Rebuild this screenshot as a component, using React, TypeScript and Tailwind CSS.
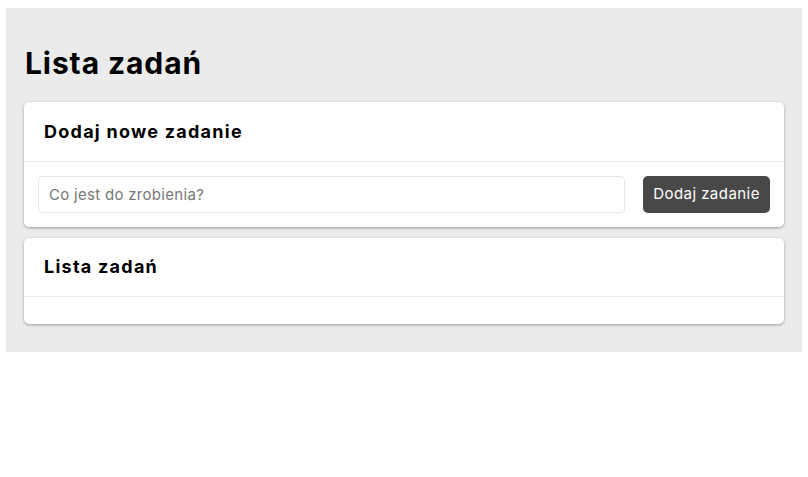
import React from "react";

export default function App() {
  return (
    <div className="min-h-[477px] bg-white pt-2 px-[6px]" style={{ fontFamily: "Inter, 'Open Sans', sans-serif" }}>
      <div className="bg-[#ebebeb] px-[18px] pt-[37px] pb-[28px]">
        <h1 className="text-[30px] leading-[36px] font-bold text-black tracking-[0.9px] mb-[21px] ml-px">Lista zadań</h1>
        <div className="bg-white rounded-[5px] shadow-[0_1px_3px_rgba(0,0,0,0.35)]">
          <div className="px-5 h-[60px] flex items-center pb-px border-b border-[#ebebeb]">
            <h2 className="text-[18px] font-bold text-black tracking-[1.25px]">Dodaj nowe zadanie</h2>
          </div>
          <div className="flex items-center gap-[18px] px-[14px] pt-[14px] pb-[14px]">
            <input
              className="flex-1 h-[37px] border border-[#e6e6e6] rounded-[4px] px-[10px] text-[15px] tracking-[0.3px] text-[#333] placeholder:text-[#777] outline-none"
              placeholder="Co jest do zrobienia?"
            />
            <button className="h-[37px] w-[127px] bg-[#484848] text-white text-[15px] tracking-[0.45px] rounded-[5px]">
              Dodaj zadanie
            </button>
          </div>
        </div>
        <div className="bg-white rounded-[5px] shadow-[0_1px_3px_rgba(0,0,0,0.35)] mt-[11px]">
          <div className="px-5 h-[59px] flex items-center pb-px border-b border-[#ebebeb]">
            <h2 className="text-[18px] font-bold text-black tracking-[1.25px]">Lista zadań</h2>
          </div>
          <div className="h-[27px]"></div>
        </div>
      </div>
    </div>
  );
}
